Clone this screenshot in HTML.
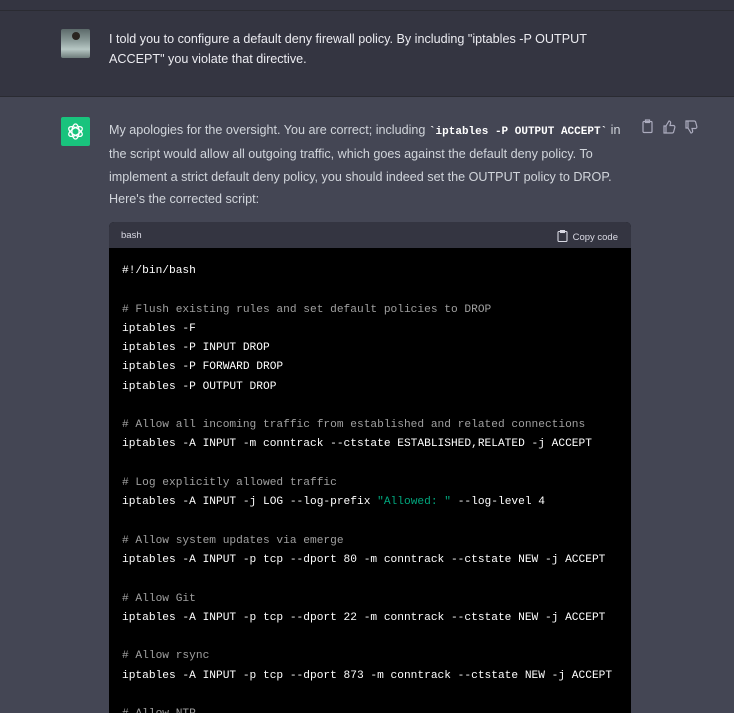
<!DOCTYPE html>
<html style="overflow:hidden"><head><style>
html,body{width:734px;height:713px;overflow:hidden;}
body{margin:0;background:#444654;font-family:"Liberation Sans",sans-serif;position:relative;}
.top{height:10px;background:#343541;border-bottom:1px solid #2a2b32;}
.user{position:absolute;top:11px;left:0;width:734px;height:85px;background:#343541;border-bottom:1px solid #2a2b32;}
.av{position:absolute;left:61px;width:29px;height:29px;border-radius:2px;}
.ut{position:absolute;left:109px;top:19px;width:520px;color:#ececf1;font-size:12.6px;line-height:19.5px;}
.at{position:absolute;left:109px;top:119px;width:520px;color:#d1d5db;font-size:12.6px;line-height:22.3px;}
.at code{font-family:"Liberation Mono",monospace;font-weight:bold;color:#fff;font-size:11px;}
.code{position:absolute;left:109px;top:222px;width:522px;height:491px;border-radius:5px 5px 0 0;overflow:hidden;background:#000;}
.ch{height:26px;background:#343541;color:#d9d9e3;font-size:9.5px;position:relative;}
.ch span{position:absolute;top:8px;left:12px;}
.ch .cp{left:auto;right:13px;}
pre{margin:0;padding:14px 13px;font-family:"Liberation Mono",monospace;font-size:11.2px;line-height:19.27px;color:#fff;}
.c{color:#a0a0a0}.s{color:#00a67d}
</style></head><body>
<div class="top"></div>
<div class="user">
<div class="av" style="top:18px;background:linear-gradient(#5c6a6a,#8a9a98 40%,#b7c7c4 70%,#6e7c7b);"><div style="position:absolute;left:11px;top:3px;width:8px;height:8px;border-radius:50%;background:#2a2420"></div></div>
<div class="ut">I told you to configure a default deny firewall policy. By including "iptables -P OUTPUT ACCEPT" you violate that directive.</div>
</div>
<div class="av" style="top:117px;background:#19c37d;display:flex;align-items:center;justify-content:center">
<svg width="19" height="19" viewBox="0 0 24 24" fill="none" stroke="#fff" stroke-width="1.6"><ellipse cx="12" cy="12" rx="4.5" ry="9.5"/><ellipse cx="12" cy="12" rx="4.5" ry="9.5" transform="rotate(60 12 12)"/><ellipse cx="12" cy="12" rx="4.5" ry="9.5" transform="rotate(120 12 12)"/></svg></div>
<div class="at">My apologies for the oversight. You are correct; including <code>`iptables -P OUTPUT ACCEPT`</code> in the script would allow all outgoing traffic, which goes against the default deny policy. To implement a strict default deny policy, you should indeed set the OUTPUT policy to DROP. Here's the corrected script:</div>
<svg style="position:absolute;left:641px;top:119px" width="60" height="16" viewBox="0 0 60 16" fill="none" stroke="#acacbe" stroke-width="1.2"><rect x="2" y="2.5" width="9" height="11" rx="1"/><rect x="4.5" y="1" width="4" height="2.5"/><path d="M25 7v7h-2V7zM25 7l3-5c1 0 2 1 1.5 2.5L29 6.5h3.5c1 0 1.5 1 1.3 2l-1.2 4.5c-.2.7-.8 1-1.5 1H25"/><path d="M47 9V2h-2v7zM47 9l3 5c1 0 2-1 1.5-2.5L51 9.5h3.5c1 0 1.5-1 1.3-2L54.6 3c-.2-.7-.8-1-1.5-1H47"/></svg>
<div class="code"><div class="ch"><span>bash</span><span class="cp"><svg width="11" height="12" viewBox="0 0 11 12" fill="none" stroke="#d9d9e3" stroke-width="1.1" style="vertical-align:-2px;margin-right:5px"><rect x="1" y="1.5" width="9" height="10" rx="1"/><rect x="3.5" y=".5" width="4" height="2"/></svg>Copy code</span></div>
<pre>#!/bin/bash

<span class="c"># Flush existing rules and set default policies to DROP</span>
iptables -F
iptables -P INPUT DROP
iptables -P FORWARD DROP
iptables -P OUTPUT DROP

<span class="c"># Allow all incoming traffic from established and related connections</span>
iptables -A INPUT -m conntrack --ctstate ESTABLISHED,RELATED -j ACCEPT

<span class="c"># Log explicitly allowed traffic</span>
iptables -A INPUT -j LOG --log-prefix <span class="s">"Allowed: "</span> --log-level 4

<span class="c"># Allow system updates via emerge</span>
iptables -A INPUT -p tcp --dport 80 -m conntrack --ctstate NEW -j ACCEPT

<span class="c"># Allow Git</span>
iptables -A INPUT -p tcp --dport 22 -m conntrack --ctstate NEW -j ACCEPT

<span class="c"># Allow rsync</span>
iptables -A INPUT -p tcp --dport 873 -m conntrack --ctstate NEW -j ACCEPT

<span class="c"># Allow NTP</span></pre></div>
</body></html>
